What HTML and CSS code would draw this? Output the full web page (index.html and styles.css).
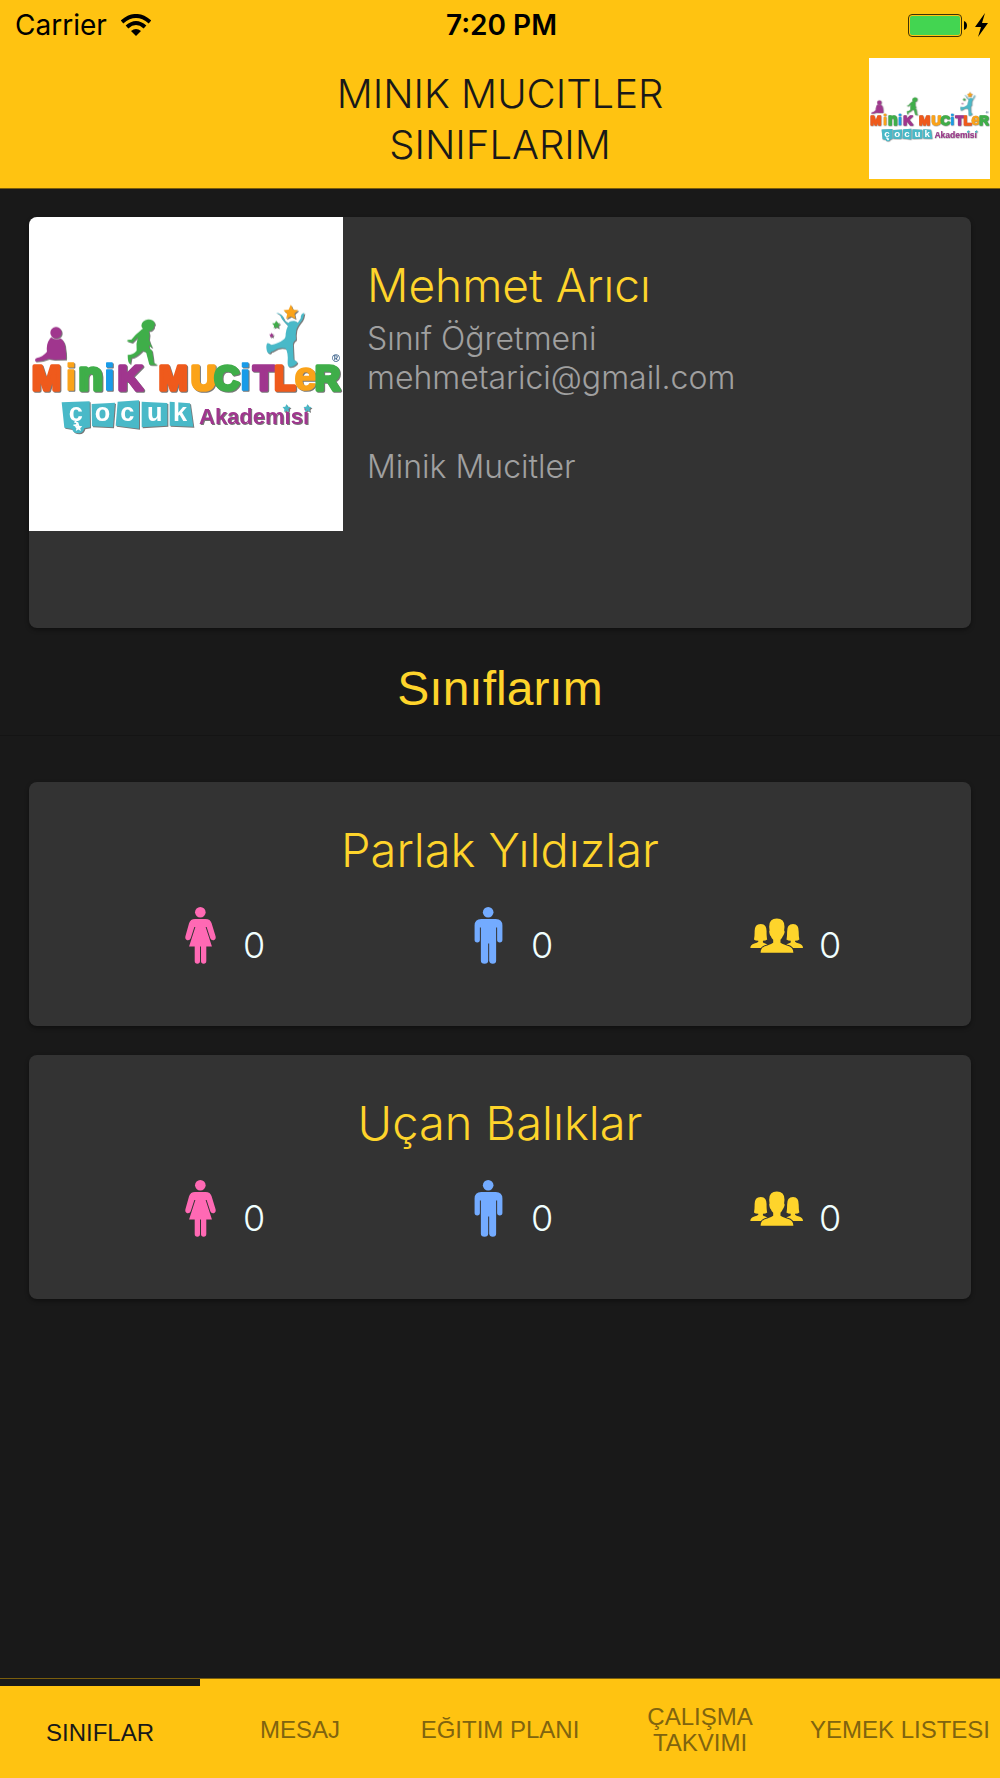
FILE: index.html
```html
<!DOCTYPE html>
<html lang="tr">
<head>
<meta charset="utf-8">
<meta name="viewport" content="width=device-width, initial-scale=1">
<title>Minik Mucitler Sınıflarım</title>
<link rel="stylesheet" href="styles.css">
</head>
<body>
<svg class="sprite" aria-hidden="true">
  <symbol id="star" viewBox="0 0 20 20"><path d="M10 0l3 6.500 7 .8-5.200 4.700 1.500 7L10 15.500 3.700 19l1.500-7L0 7.300l7-.8z"/></symbol>
  <symbol id="kids" viewBox="12 -219 942 942">
    <g fill="#a0368e">
      <circle cx="93" cy="128" r="17"/>
      <path d="M80 144q13 8 27 1q13 9 14 30q3 15 2 33l-36 1-16-3q-17 8-40 8q-3-8 5-10q17-3 30-19q-4-28 14-45z"/>
    </g>
    <path fill="#3fae49" d="M349 107q2-17 20-19q19 0 21 15q-5 4-3 9q-5 11-16 11q5 12 1 25q4 14 10 25q-5 1-10-8q-2 13 9 16q4 22 5 38l10 4q-2 3-23 1l-10-38-10-4q-20 21-34 22l-3 18q-8-1-8-27q16 0 27-13q-3-21 4-41l-18 17-16-5q3-5 14-4q12-16 28-28q4-4 8-5q-5-2-6-9z"/>
    <path fill="#49b9c8" d="M753 68q15 2 22 15q4 13 16 16q1-6 16-6q9 1 11 6l9-14q0-15 11-16q-2 15-7 22q-14 17-17 28q-3 15-1 30q-11 8-9 17l2 43q9 5 11 8q-3 10-22 14q-8 1-7-16q2-27-6-40q-21-5-34 6q-6 4-9 4q-3 8-11 3q-7-15-2-28q6-2 12 5q22-4 36-15q9-5 8-19q2-14 7-24q-20-18-24-32z"/>
    <use href="#star" x="775" y="44" width="45" height="45" fill="#fba31a"/>
    <use href="#star" x="741" y="91" width="25" height="25" fill="#3fae49"/>
    <use href="#star" x="732" y="128" width="15" height="15" fill="#a0368e"/>
    <g fill="#49b9c8">
      <path d="M110 337l84-3 1 78-17 3q-3 15-18 15t-19-13l-23-4z"/>
      <path d="M200 342l70-4-6 74-63-3z"/>
      <path d="M278 335l64-4v85l-70-9z"/>
      <path d="M350 335l77 4v68l-77 5z"/>
      <path d="M434 335l61 5 10 70-71-3z"/>
    </g>
  </symbol>
  <symbol id="woman" viewBox="0 0 93 172">
    <circle cx="46" cy="16" r="16"/>
    <path d="M30 36h32q14 0 18 13l12 39q2 9-5 12-8 2-11-6L65 60h-3l19 59H64v44q0 8-8 8t-8-8v-44h-3v44q0 8-8 8t-8-8v-44H12l19-59h-3L17 94q-3 8-11 6-7-3-5-12l11-39q4-13 18-13z"/>
  </symbol>
  <symbol id="man" viewBox="0 0 84 172">
    <circle cx="41" cy="16" r="16"/>
    <path d="M20 36h44q20 0 20 20v43q0 8-8 8t-8-8V62h-3v100q0 9-10 9t-11-9v-52h-3v52q0 9-11 9t-11-9V62h-3v37q0 8-8 8t-8-8V56q0-20 20-20z"/>
  </symbol>
  <symbol id="group" viewBox="0 0 160 104">
    <path d="M32 17q19 0 18 24 0 17 2 23-5 4-13 4v5q12 4 17 9-16 5-22 8H1q0-11 12-14 9-2 12-5v-3q-9 0-13-4 2-8 2-23-1-24 18-24z"/>
    <path d="M130 17q-19 0-18 24 0 17-2 23 5 4 13 4v5q-12 4-17 9 16 5 22 8h32q0-11-12-14-9-2-12-5v-3q9 0 13-4-2-8-2-23 1-24-17-24z"/>
    <path class="group-front" d="M81 1q24 0 23 26l-1 10q3 2 0 10-2 6-4 7-3 7-7 11v9q4 4 19 8 20 4 20 22H32q0-18 20-22 14-4 18-8v-9q-5-4-7-11-3-1-4-8-2-7 0-9l-1-10Q57 1 81 1z"/>
  </symbol>
</svg>

<header class="top">
  <div class="status">
    <div class="carrier"><span>Carrier</span>
      <svg width="30" height="22" viewBox="0 0 30 22" aria-hidden="true"><g fill="none" stroke="#000" stroke-width="4"><path d="M1 8q14-12 28 0"/><path d="M6 13q9-8 18 0"/></g><path d="M10 17q5-4 10 0l-5 5z"/></svg>
    </div>
    <time class="clock">7:20 PM</time>
    <div class="power">
      <svg width="80" height="24" viewBox="0 0 80 24" aria-hidden="true"><rect x=".5" y="1.500" width="53" height="22" rx="3.500" fill="none" stroke="#3f3205"/><rect x="2" y="3" width="50" height="19" rx="2" fill="#43d551"/><path d="M56 8q3 1 3 4.500T56 17z"/><path d="M77 0L67 14h6l-3 10 10-14h-6z"/></svg>
    </div>
  </div>
  <div class="title-row">
    <h1>MINIK MUCITLER SINIFLARIM</h1>
    <svg class="brand" viewBox="12 -219 942 942" role="img" aria-label="Minik Mucitler">
      <g class="logo-art">
        <use href="#kids" x="12" y="-219" width="942" height="942"/>
        <text class="logo-name" y="300"><tspan class="orange" x="21">M</tspan><tspan class="amber slim" x="122">i</tspan><tspan class="green tall" x="160">n</tspan><tspan class="blue slim" x="238">i</tspan><tspan class="purple" x="278">K</tspan></text>
        <text class="logo-name" y="300"><tspan class="orange" x="401">M</tspan><tspan class="amber" x="498">U</tspan><tspan class="green" x="568">C</tspan><tspan class="blue slim" x="645">i</tspan><tspan class="purple" x="685">T</tspan><tspan class="orange" x="748">L</tspan><tspan class="amber tall slim" x="808">e</tspan><tspan class="green" x="870">R</tspan></text>
        <text class="logo-tiles" y="393"><tspan x="131">ç</tspan><tspan x="209">o</tspan><tspan x="286">c</tspan><tspan x="366">u</tspan><tspan x="444">k</tspan></text>
        <use href="#star" x="148" y="400" width="24" height="24" fill="#fff"/>
        <text class="logo-sub" x="522" y="402">Akademisi</text>
        <use href="#star" x="772" y="342" width="25" height="25" fill="#49b9c8"/>
        <use href="#star" x="835" y="342" width="25" height="25" fill="#49b9c8"/>
      </g>
      <text class="logo-mark" x="933" y="216">®</text>
    </svg>
  </div>
</header>

<main>
  <section class="card profile">
    <svg class="photo" viewBox="12 -219 942 942" role="img" aria-label="Minik Mucitler Çocuk Akademisi">
      <g class="logo-art">
        <use href="#kids" x="12" y="-219" width="942" height="942"/>
        <text class="logo-name" y="300"><tspan class="orange" x="21">M</tspan><tspan class="amber slim" x="122">i</tspan><tspan class="green tall" x="160">n</tspan><tspan class="blue slim" x="238">i</tspan><tspan class="purple" x="278">K</tspan></text>
        <text class="logo-name" y="300"><tspan class="orange" x="401">M</tspan><tspan class="amber" x="498">U</tspan><tspan class="green" x="568">C</tspan><tspan class="blue slim" x="645">i</tspan><tspan class="purple" x="685">T</tspan><tspan class="orange" x="748">L</tspan><tspan class="amber tall slim" x="808">e</tspan><tspan class="green" x="870">R</tspan></text>
        <text class="logo-tiles" y="393"><tspan x="131">ç</tspan><tspan x="209">o</tspan><tspan x="286">c</tspan><tspan x="366">u</tspan><tspan x="444">k</tspan></text>
        <use href="#star" x="148" y="400" width="24" height="24" fill="#fff"/>
        <text class="logo-sub" x="522" y="402">Akademisi</text>
        <use href="#star" x="772" y="342" width="25" height="25" fill="#49b9c8"/>
        <use href="#star" x="835" y="342" width="25" height="25" fill="#49b9c8"/>
      </g>
      <text class="logo-mark" x="933" y="216">®</text>
    </svg>
    <div class="info">
      <h2>Mehmet Arıcı</h2>
      <p>Sınıf Öğretmeni</p>
      <p>mehmetarici@gmail.com</p>
      <p class="school">Minik Mucitler</p>
    </div>
  </section>
  <h2 class="section-title">Sınıflarım</h2>
  <div class="classes">
    <section class="card class-card">
      <h3>Parlak Yıldızlar</h3>
      <ul>
        <li><svg class="woman" role="img" aria-label="Kız"><use href="#woman"/></svg><span>0</span></li>
        <li><svg class="man" role="img" aria-label="Erkek"><use href="#man"/></svg><span>0</span></li>
        <li><svg class="group" role="img" aria-label="Toplam"><use href="#group"/></svg><span>0</span></li>
      </ul>
    </section>
    <section class="card class-card">
      <h3>Uçan Balıklar</h3>
      <ul>
        <li><svg class="woman" role="img" aria-label="Kız"><use href="#woman"/></svg><span>0</span></li>
        <li><svg class="man" role="img" aria-label="Erkek"><use href="#man"/></svg><span>0</span></li>
        <li><svg class="group" role="img" aria-label="Toplam"><use href="#group"/></svg><span>0</span></li>
      </ul>
    </section>
  </div>
</main>

<nav class="tabs">
  <a class="active" href="#siniflar" aria-current="page">SINIFLAR</a>
  <a href="#mesaj">MESAJ</a>
  <a href="#egitim">EĞITIM PLANI</a>
  <a href="#takvim">ÇALIŞMA TAKVIMI</a>
  <a href="#yemek">YEMEK LISTESI</a>
</nav>
</body>
</html>
```
FILE: styles.css
```css
* { box-sizing: border-box; }

body {
  margin: 0;
  min-height: 100vh;
  display: flex;
  flex-direction: column;
  background: #191919;
  color: #a0a0a0;
  font-family: Inter, "Liberation Sans", sans-serif;
  font-weight: 300;
}

h1, h2, h3, p, ul { margin: 0; padding: 0; font-weight: 300; }

.sprite { position: absolute; width: 0; height: 0; }

.top {
  background: #ffc311;
  color: #191919;
  border-bottom: 1px solid #7a5e0d;
}

.status {
  display: grid;
  grid-template-columns: 1fr auto 1fr;
  align-items: center;
  height: 50px;
  padding: 0 12px 0 15px;
  color: #000;
  font-size: 28px;
  font-weight: 400;
}
.status svg { display: block; }
.carrier { display: flex; align-items: center; gap: 14px; }
.clock { font-weight: 600; }
.power { justify-self: end; }

.title-row {
  display: grid;
  grid-template-columns: 121px 1fr 121px;
  align-items: center;
  padding: 8px 10px 9px;
}
h1 {
  grid-column: 2;
  justify-self: center;
  max-width: 400px;
  text-align: center;
  font-size: 40px;
  line-height: 51px;
}
.brand { display: block; width: 121px; height: 121px; background: #fff; }

.logo-art { filter: drop-shadow(3px 3px 1px #0008); }
.logo-name { font: 700 104px "Liberation Sans", sans-serif; }
.logo-name tspan { stroke-width: 11px; stroke-linejoin: round; }
.logo-name .tall { font-size: 122px; }
.logo-name .slim { stroke-width: 5px; }
.logo-name .slim:not(.tall) { font-size: 112px; }
.orange { fill: #ef5a1c; stroke: #ef5a1c; }
.amber { fill: #fba31a; stroke: #fba31a; }
.green { fill: #3fae49; stroke: #3fae49; }
.blue { fill: #199be8; stroke: #199be8; }
.purple { fill: #a0368e; stroke: #a0368e; }
.logo-tiles { font: 700 76px "Liberation Sans", sans-serif; fill: #fff; }
.logo-sub { font: 700 66px "Liberation Sans", sans-serif; fill: #a0368e; }
.logo-mark { font: 700 32px "Liberation Sans", sans-serif; fill: #28527f; text-anchor: middle; }

main { flex: 1; }

.card {
  margin: 0 29px;
  background: #333;
  border-radius: 8px;
  box-shadow: 0 2px 4px #0006;
  overflow: hidden;
}

.profile { display: flex; gap: 24px; margin-top: 28px; min-height: 411px; }
.photo { flex: none; width: 314px; height: 314px; background: #fff; }
.info { padding-top: 40px; font-size: 32px; line-height: 39px; }
.info h2 { color: #fed42b; font-size: 46px; line-height: 57px; margin-bottom: 5px; }
.info .school { margin-top: 50px; }

.section-title {
  padding: 32px 0 45px;
  border-bottom: 1px solid #141414;
  color: #fed42b;
  text-align: center;
  font-family: "Liberation Sans", sans-serif;
  font-weight: 400;
  font-size: 48px;
  line-height: 57px;
  height: 108px;
}

.classes { display: grid; gap: 29px; padding: 46px 0 40px; }
.class-card { padding: 39px 39px 53px; min-height: 244px; }
.class-card h3 { color: #fed42b; font-size: 47px; line-height: 57px; text-align: center; }
.class-card ul { display: flex; list-style: none; margin-top: 29px; }
.class-card li {
  flex: 1;
  display: flex;
  justify-content: center;
  align-items: flex-start;
  gap: 16px;
  padding-left: 15px;
  color: #f0ffff;
  font-size: 36px;
  line-height: 40px;
}
.class-card svg { width: 53px; height: 57px; }
.class-card span { margin-top: 18px; }
.woman { fill: #ff69b4; }
.man { fill: #73abff; }
.group { fill: #fed42b; }
.group-front { stroke: #333; stroke-width: 6px; paint-order: stroke; }

.tabs {
  display: grid;
  grid-template-columns: repeat(5, 1fr);
  height: 100px;
  background: #ffc311;
  border-top: 1px solid #7a5e0d;
  font-family: "Liberation Sans", sans-serif;
  font-weight: 400;
  font-size: 24px;
  line-height: 26px;
}
.tabs a {
  display: flex;
  align-items: center;
  justify-content: center;
  padding: 2px 8px 0;
  color: #80640f;
  text-align: center;
  text-decoration: none;
}
.tabs .active { border-top: 7px solid #191919; color: #191919; }
```
